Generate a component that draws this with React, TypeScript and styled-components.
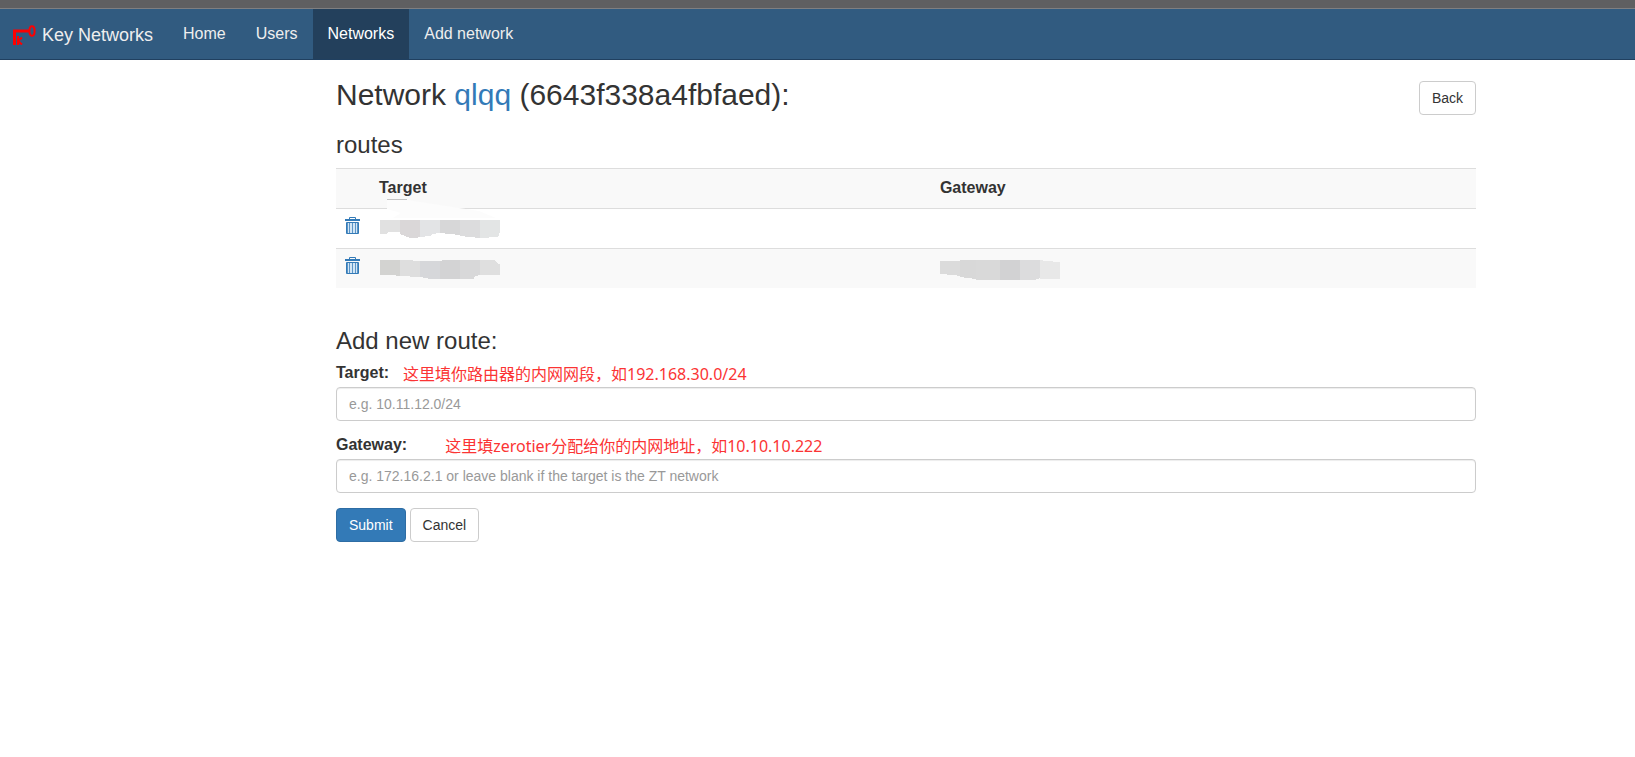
import React from "react";
import styled, { createGlobalStyle } from "styled-components";

const GlobalStyle = createGlobalStyle`
  *, *::before, *::after { box-sizing: border-box; }
  body {
    margin: 0;
    background: #fff;
    color: #333;
    font-family: "Liberation Sans", Arial, "Noto Sans CJK SC", sans-serif;
    font-size: 16px;
    line-height: 23px;
  }
  a { color: #337ab7; text-decoration: none; }
`;

const TopStrip = styled.div`
  height: 9px;
  background: #5f5f61;
  border-bottom: 1px solid #7f7f81;
`;

const Navbar = styled.nav`
  display: flex;
  height: 51px;
  background: #315b80;
  border-bottom: 1px solid #204060;
`;

const Brand = styled.a`
  && { color: #eee; }
  display: flex;
  align-items: center;
  gap: 6px;
  padding: 2px 15px 0 13px;
  font-size: 18px;
`;

const NavLink = styled.a<{ $active?: boolean }>`
  && { color: ${(p) => (p.$active ? "#fff" : "#eee")}; }
  padding: 13px 15px 14px;
  background: ${(p) => (p.$active ? "#23405c" : "transparent")};
`;

const Page = styled.main`
  padding: 18px 159px 20px 336px;
`;

const TitleRow = styled.header`
  display: flex;
  justify-content: space-between;
  align-items: flex-start;
`;

const Title = styled.h1`
  margin: 0;
  font-size: 30px;
  line-height: 33px;
  font-weight: 500;
`;

const Subtitle = styled.h2`
  margin: 0;
  font-size: 24px;
  line-height: 26px;
  font-weight: 500;
`;

const RoutesHeading = styled(Subtitle)`
  margin: 17px 0 10px;
`;

const Button = styled.button<{ $primary?: boolean }>`
  height: 34px;
  padding: 0 12px;
  border: 1px solid ${(p) => (p.$primary ? "#2e6da4" : "#ccc")};
  border-radius: 4px;
  background: ${(p) => (p.$primary ? "#337ab7" : "#fff")};
  color: ${(p) => (p.$primary ? "#fff" : "#333")};
  font-family: inherit;
  font-size: 14px;
  line-height: 20px;
`;

const BackButton = styled(Button)`
  margin-top: 3px;
`;

const RoutesTable = styled.table`
  width: 100%;
  border-collapse: separate;
  border-spacing: 0;
  table-layout: fixed;
  margin-bottom: 40px;

  tr:nth-child(odd) { background: #f9f9f9; }
  th, td {
    height: 40px;
    padding: 7px 8px;
    border-top: 1px solid #ddd;
    text-align: left;
    vertical-align: top;
  }
`;

const IconColumn = styled.col` width: 35px; `;
const TargetColumn = styled.col` width: 49.2%; `;

const IconLink = styled.a`
  display: block;
  width: 17px;
  height: 18px;
`;

const Drawing = styled.svg`
  display: block;
`;

const Mask = styled(Drawing)`
  margin-top: 4px;
`;

const MaskCell = styled.td`
  position: relative;
`;

const Smear = styled.svg`
  position: absolute;
  top: -10px;
  left: 8px;
`;

const RouteForm = styled.form`
  margin-top: 7px;
`;

const Field = styled.div`
  margin-bottom: 12px;
`;

const LabelRow = styled.div<{ $gap: number }>`
  display: flex;
  align-items: flex-end;
  gap: ${(p) => p.$gap}px;
  height: 23px;
`;

const Label = styled.label`
  height: 23px;
  font-weight: 700;
`;

const Hint = styled.span`
  height: 21px;
  color: #fb3434;
  font-family: "Noto Sans", "Noto Sans CJK SC", sans-serif;
`;

const TextInput = styled.input`
  display: block;
  width: 100%;
  height: 34px;
  margin-top: 3px;
  padding: 6px 12px;
  border: 1px solid #ccc;
  border-radius: 4px;
  box-shadow: inset 0 1px 1px rgba(0, 0, 0, 0.075);
  color: #555;
  font-family: inherit;
  font-size: 14px;
  &::placeholder { color: #999; opacity: 1; }
`;

const Actions = styled.div`
  display: flex;
  gap: 4px;
  padding-top: 3px;
`;

const KeyLogo = () => (
  <Drawing width="23" height="20" viewBox="0 0 23 20" fill="none" stroke="#f00" aria-hidden="true">
    <path d="M1.5 20V6H16" strokeWidth="3" />
    <ellipse cx="19" cy="6" rx="2.6" ry="4.8" strokeWidth="2" />
    <path d="M5 11V20M9 12.5L5 16L9 19.5" strokeWidth="2" />
  </Drawing>
);

const TrashIcon = () => (
  <Drawing width="17" height="18" viewBox="0 0 17 18" fill="none" stroke="#337ab7" aria-hidden="true">
    <path d="M5.5 3V1.5H11.5V3" />
    <path d="M1 4H16" strokeWidth="2" />
    <path d="M2.5 6.5H14.5V17.5H2.5Z" fill="#d3e6f5" />
    <path d="M3.5 7V17M5.5 7V17M8.5 7V17M11.5 7V17M13.5 7V17" strokeOpacity="0.75" />
  </Drawing>
);

type MaskTile = { points: string; fill: string };

const targetOne: MaskTile[] = [
  { points: "1,0 21,0 21,12 9,12 7,14 1,14", fill: "#e1e1e1" },
  { points: "21,0 41,0 41,17 36,18 31,18 21,14", fill: "#dad7d8" },
  { points: "41,0 61,0 61,13 53,14 51,16 41,17", fill: "#e3e4e6" },
  { points: "61,0 81,0 81,15 61,13", fill: "#d7d7d8" },
  { points: "81,0 101,0 101,18 81,16", fill: "#dcdcdd" },
  { points: "101,0 121,0 121,12 119,17 101,18", fill: "#e3e5e5" },
];
const targetTwo: MaskTile[] = [
  { points: "1,0 21,0 21,16 13,15 1,15", fill: "#d3d3d1" },
  { points: "21,0 26,0 41,1 41,17 21,16", fill: "#dedede" },
  { points: "41,1 61,1 61,19 51,19 41,17", fill: "#d6d7da" },
  { points: "61,1 65,0 81,0 81,19 61,19", fill: "#d3d3d4" },
  { points: "81,0 101,0 101,15 96,16 95,19 81,19", fill: "#d8d8d9" },
  { points: "101,0 115,0 119,4 121,4 121,15 101,15", fill: "#dfdfdf" },
];
const gatewayTwo: MaskTile[] = [
  { points: "0,1 20,1 20,16 14,15 0,14", fill: "#dbdbdb" },
  { points: "20,0 36,0 36,19 20,17", fill: "#d8d8d8" },
  { points: "36,0 60,0 60,20 36,20", fill: "#d9d9d9" },
  { points: "60,0 80,0 80,20 60,20", fill: "#d2d2d3" },
  { points: "80,0 100,0 100,18 95,20 80,20", fill: "#dcdcdd" },
  { points: "100,0 106,1 120,2 120,19 100,19", fill: "#e8e8e8" },
];

const HiddenValue = ({ tiles }: { tiles: MaskTile[] }) => (
  <Mask width="121" height="20" viewBox="0 0 121 20" shapeRendering="crispEdges" aria-hidden="true">
    {tiles.map((t) => (
      <polygon key={t.points} points={t.points} fill={t.fill} />
    ))}
  </Mask>
);

const BrushSmear = () => (
  <Smear width="120" height="20" viewBox="0 0 120 20" aria-hidden="true">
    <polygon points="8,1 28,1 80,9 100,12 117,19 14,19 22,14 8,10" fill="#fcfcfc" />
    <path d="M8 0.5H28" stroke="#c4c4c4" />
  </Smear>
);

const routes = [
  { id: 1, target: targetOne, gateway: null, smeared: true },
  { id: 2, target: targetTwo, gateway: gatewayTwo, smeared: false },
];

export default function App() {
  return (
    <>
      <GlobalStyle />
      <TopStrip />
      <Navbar>
        <Brand href="#"><KeyLogo />Key Networks</Brand>
        <NavLink href="#">Home</NavLink>
        <NavLink href="#">Users</NavLink>
        <NavLink href="#" $active>Networks</NavLink>
        <NavLink href="#">Add network</NavLink>
      </Navbar>
      <Page>
        <TitleRow>
          <Title>Network <a href="#">qlqq</a> (6643f338a4fbfaed):</Title>
          <BackButton type="button">Back</BackButton>
        </TitleRow>
        <RoutesHeading>routes</RoutesHeading>
        <RoutesTable>
          <colgroup><IconColumn /><TargetColumn /><col /></colgroup>
          <tbody>
            <tr><th /><th scope="col">Target</th><th scope="col">Gateway</th></tr>
            {routes.map((r) => (
              <tr key={r.id}>
                <td><IconLink href="#" aria-label="Delete route"><TrashIcon /></IconLink></td>
                <MaskCell>
                  {r.smeared && <BrushSmear />}
                  <HiddenValue tiles={r.target} />
                </MaskCell>
                <td>{r.gateway && <HiddenValue tiles={r.gateway} />}</td>
              </tr>
            ))}
          </tbody>
        </RoutesTable>
        <Subtitle>Add new route:</Subtitle>
        <RouteForm>
          <Field>
            <LabelRow $gap={14}>
              <Label htmlFor="target">Target:</Label>
              <Hint>这里填你路由器的内网网段，如192.168.30.0/24</Hint>
            </LabelRow>
            <TextInput id="target" placeholder="e.g. 10.11.12.0/24" />
          </Field>
          <Field>
            <LabelRow $gap={38}>
              <Label htmlFor="gateway">Gateway:</Label>
              <Hint>这里填zerotier分配给你的内网地址，如10.10.10.222</Hint>
            </LabelRow>
            <TextInput id="gateway" placeholder="e.g. 172.16.2.1 or leave blank if the target is the ZT network" />
          </Field>
          <Actions>
            <Button type="submit" $primary>Submit</Button>
            <Button type="button">Cancel</Button>
          </Actions>
        </RouteForm>
      </Page>
    </>
  );
}
